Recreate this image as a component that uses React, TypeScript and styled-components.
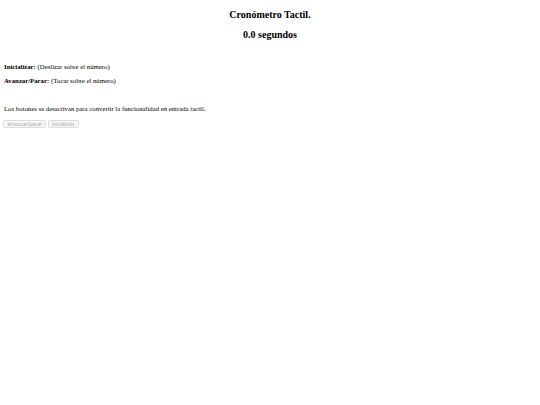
import * as React from 'react';
import styled, { createGlobalStyle } from 'styled-components';

const GlobalStyle = createGlobalStyle`
  html, body {
    margin: 0;
    padding: 0;
    background: #fff;
  }
  body {
    font-family: "Liberation Serif", "Times New Roman", serif;
    color: #000;
  }
`;

const Page = styled.div`
  padding: 0 4px;
  font-size: 8px;
  line-height: 1.15;
`;

const Heading = styled.h3`
  margin: 9px 0 0;
  font-size: 10px;
  font-weight: bold;
  text-align: center;
  line-height: 11px;
`;

const Instructions = styled.div`
  margin-top: 23px;
  display: flex;
  flex-direction: column;
  gap: 6px;
`;

const Line = styled.p`
  margin: 0;
  font-size: 6.75px;
`;

const Note = styled.p`
  margin: 20px 0 0;
  font-size: 6.75px;
`;

const Buttons = styled.div`
  margin-top: 8px;
  display: flex;
  gap: 1.5px;
  margin-left: -1px;
`;

const Button = styled.button`
  font-family: "Liberation Sans", Arial, sans-serif;
  font-size: 5.5px;
  height: 8px;
  padding: 0 3.2px;
  color: #b0b0b0;
  background: #f6f6f6;
  border: 1px solid #dcdcdc;
  border-radius: 1.5px;
  line-height: 1;
`;

export default function App() {
  return (
    <>
      <GlobalStyle />
      <Page>
        <Heading>Cronómetro Tactil.</Heading>
        <Heading>0.0 segundos</Heading>
        <Instructions>
          <Line>
            <b>Inicializar:</b> (Deslizar sobre el número)
          </Line>
          <Line>
            <b>Avanzar/Parar:</b> (Tocar sobre el número)
          </Line>
        </Instructions>
        <Note>Los botones se desactivan para convertir la funcionalidad en entrada tactil.</Note>
        <Buttons>
          <Button disabled>arrancar/parar</Button>
          <Button disabled>inicializar</Button>
        </Buttons>
      </Page>
    </>
  );
}
